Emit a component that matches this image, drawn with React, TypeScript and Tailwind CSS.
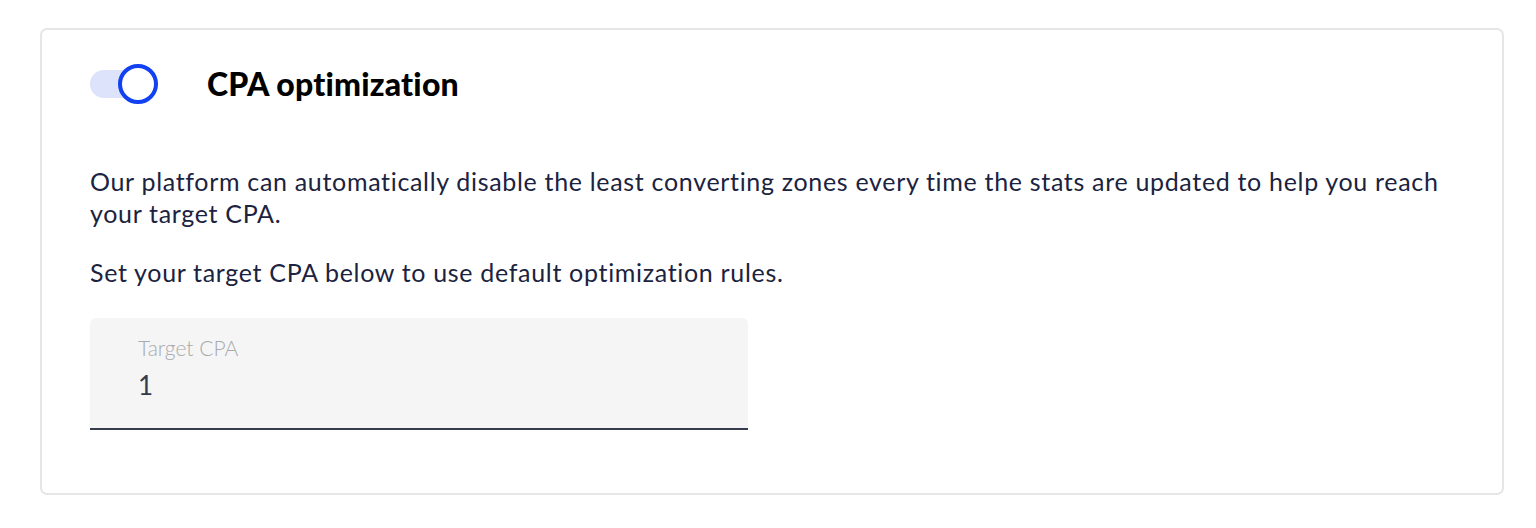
import React, { useState } from 'react';

export default function App() {
  const [enabled, setEnabled] = useState(true);
  const [cpa, setCpa] = useState('1');

  return (
    <div className="min-h-[528px] bg-white pl-[40px] pt-[28px]" style={{ fontFamily: 'Lato, "Liberation Sans", sans-serif' }}>
      <div className="w-[1464px] h-[467px] rounded-[7px] border-2 border-[#e6e6e6] pl-[48px] pr-[48px] pt-[33px]">
        {/* Header */}
        <div className="flex items-center h-[42px]">
          <button
            onClick={() => setEnabled(!enabled)}
            className="relative w-[68px] h-[40px] flex items-center"
          >
            <span className="block w-[60px] h-[28px] rounded-full bg-[#dde3fb]"></span>
            <span className="absolute left-[28px] top-0 w-[40px] h-[40px] rounded-full border-4 border-[#1141f2] bg-white"></span>
          </button>
          <h2 className="ml-[49px] text-[32px] font-black text-black tracking-[0.2px]">CPA optimization</h2>
        </div>

        {/* Description */}
        <div className="mt-[60px] text-[#1b2340] text-[25px] leading-[32px] tracking-[0.68px] max-w-[1375px]">
          <p>
            Our platform can automatically disable the least converting zones every time the stats are updated to help you reach your target CPA.
          </p>
          <p className="mt-[27px]">Set your target CPA below to use default optimization rules.</p>
        </div>

        {/* Input */}
        <div className="mt-[30px] w-[658px] h-[112px] rounded-t-[6px] bg-[#f5f5f5] border-b-2 border-[#363b4e] pl-[48px] pt-[17px]">
          <label className="block text-[21px] font-light text-[#a9a9ae] leading-[26px]">Target CPA</label>
          <input
            value={cpa}
            onChange={(e) => setCpa(e.target.value)}
            className="mt-[7px] w-full bg-transparent outline-none text-[26px] text-[#333a4d] leading-[34px]"
          />
        </div>
      </div>
    </div>
  );
}
